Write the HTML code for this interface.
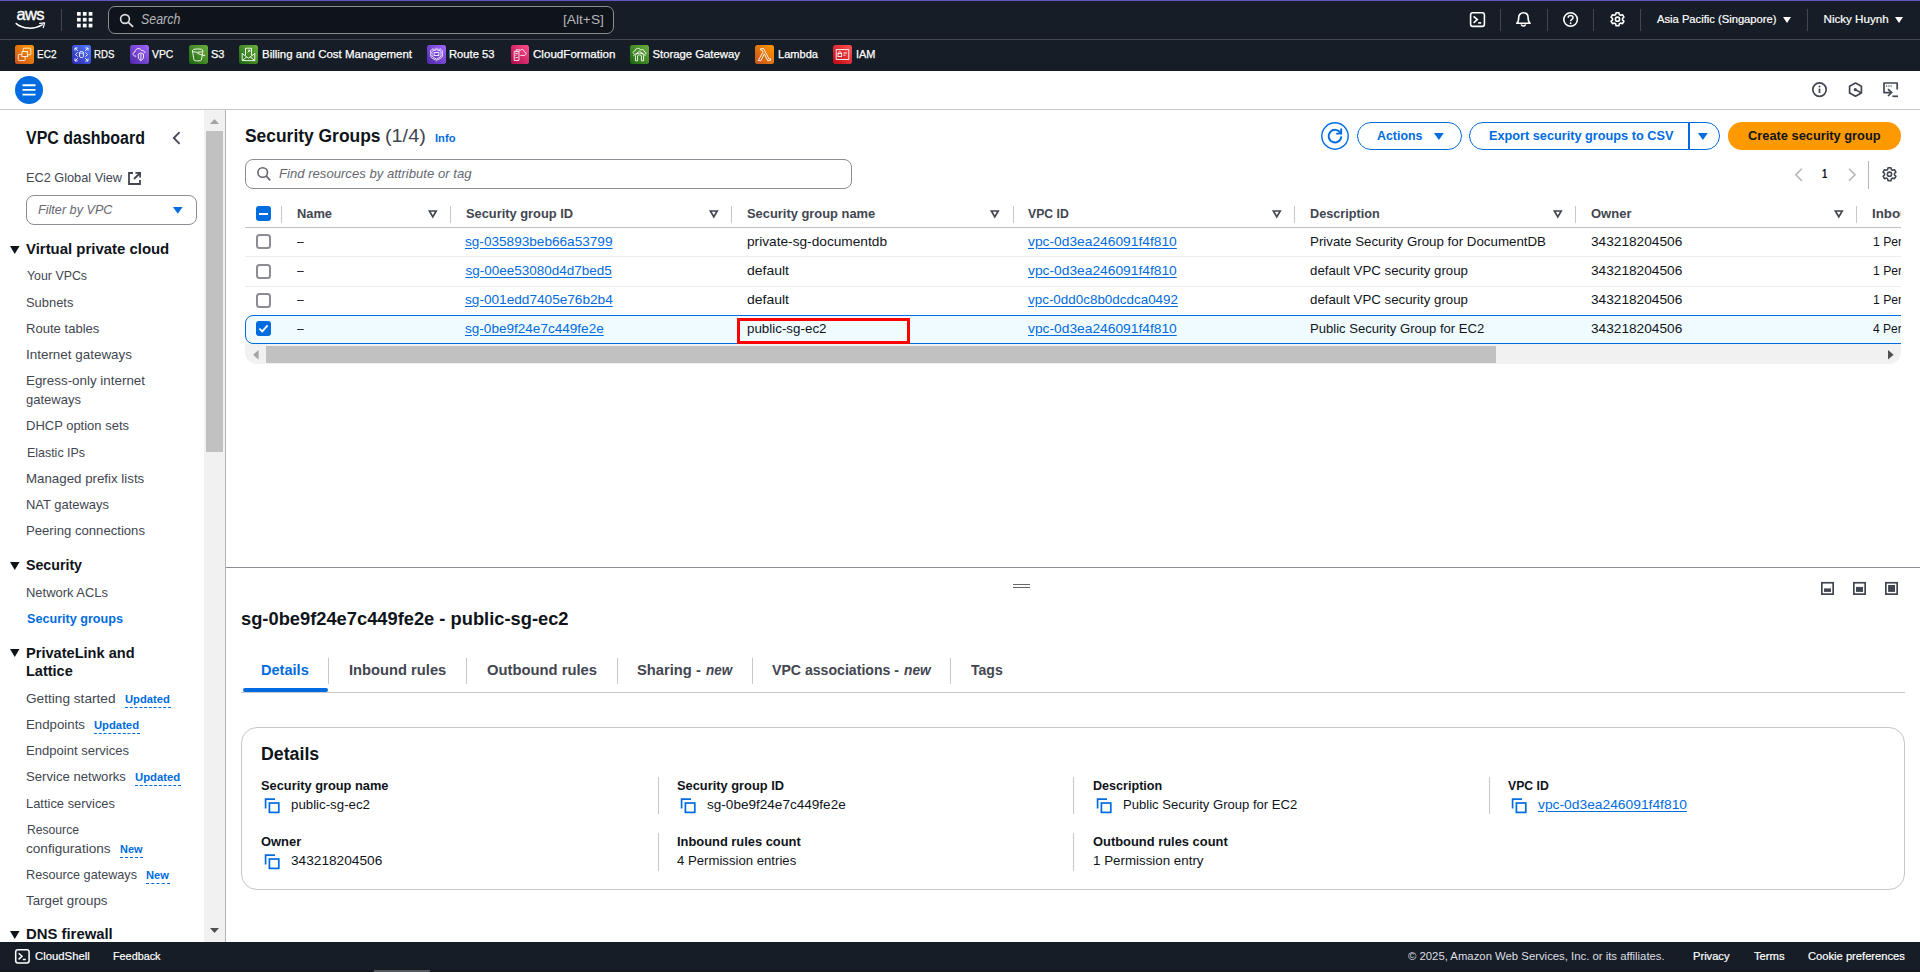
<!DOCTYPE html>
<html><head><meta charset="utf-8">
<style>
*{box-sizing:border-box;margin:0;padding:0}
html,body{width:1920px;height:972px;overflow:hidden;background:#fff;font-family:"Liberation Sans",sans-serif;color:#0f141a;font-size:14px}
div{position:absolute}
.t{position:absolute;white-space:nowrap}
svg{position:absolute;overflow:visible}
.vsep{top:9px;width:1px;height:22px;background:#424650}
.fav{top:45px;width:19px;height:19px;border-radius:2px;overflow:hidden}

.dash{height:0;border-top:1px dashed #006ce0}
.hsep{top:206px;width:1px;height:17px;background:#c6c6cd}
.cb{left:256px;width:15px;height:15px;border:2px solid #8c8c94;border-radius:3.5px;background:#fff}
.cbon{left:256px;width:15px;height:15px;border-radius:3px;background:#006ce0}
.tsep{top:658px;width:1px;height:26px;background:#c6c6cd}
.dsep{width:1px;background:#c6c6cd}
.btn{top:122px;height:28px;border:1.5px solid #006ce0;border-radius:14px;background:#fff}
</style></head><body>
<!-- top navigation -->
<div style="left:0;top:0;width:1920px;height:71px;background:#161d26"></div>
<div style="left:0;top:0;width:1920px;height:1px;background:#6355c4"></div>
<div style="left:0;top:39px;width:1920px;height:1px;background:#424650"></div>
<div style="left:108px;top:6px;width:506px;height:28px;border:1px solid #8c8c94;border-radius:7px;background:#0f141a"></div>
<div class="vsep" style="left:61px"></div>
<div class="vsep" style="left:1500px"></div>
<div class="vsep" style="left:1547px"></div>
<div class="vsep" style="left:1593px"></div>
<div class="vsep" style="left:1640px"></div>
<div class="vsep" style="left:1807px"></div>
<!-- toolbar -->
<div style="left:0;top:109px;width:1920px;height:1px;background:#c6c6cd"></div>
<!-- sidebar -->
<div style="left:204px;top:110px;width:21px;height:832px;background:#f1f1f1"></div>
<div style="left:206px;top:131px;width:17px;height:321px;background:#c1c1c1"></div>
<div style="left:225px;top:110px;width:1px;height:832px;background:#b4b4bb"></div>
<div style="left:26px;top:195px;width:171px;height:30px;border:1px solid #8c8c94;border-radius:8px;background:#fff"></div>
<!-- main: table -->
<div style="left:245px;top:159px;width:607px;height:30px;border:1px solid #8c8c94;border-radius:8px;background:#fff"></div>
<div style="left:245px;top:227px;width:1656px;height:1px;background:#c0c0c7"></div>
<div style="left:245px;top:256px;width:1656px;height:1px;background:#ebebf0"></div>
<div style="left:245px;top:286px;width:1656px;height:1px;background:#ebebf0"></div>
<div style="left:245px;top:314.8px;width:1666px;height:29.2px;border:1.3px solid #006ce0;border-radius:8px;background:#f0fbff;clip-path:inset(0 10px 0 0)"></div>
<div style="left:737px;top:318px;width:172.5px;height:26px;border:3px solid #ff0000"></div>
<!-- h-scrollbar -->
<div style="left:245px;top:344px;width:1656px;height:20px;background:#f1f1f1;border-radius:0 0 12px 12px"></div>
<div style="left:266px;top:346px;width:1230px;height:17px;background:#c1c1c1"></div>
<!-- split line -->
<div style="left:226px;top:567px;width:1694px;height:1px;background:#8c8c94"></div>
<div style="left:1013px;top:583.5px;width:16.5px;height:1px;background:#656871"></div>
<div style="left:1013px;top:587.2px;width:16.5px;height:1px;background:#656871"></div>
<!-- tabs -->
<div style="left:241px;top:692px;width:1664px;height:1px;background:#c6c6cd"></div>
<div style="left:243px;top:688px;width:85px;height:4px;background:#006ce0;border-radius:2px"></div>
<div class="tsep" style="left:328px"></div>
<div class="tsep" style="left:466px"></div>
<div class="tsep" style="left:617px"></div>
<div class="tsep" style="left:752px"></div>
<div class="tsep" style="left:950px"></div>
<!-- card -->
<div style="left:241px;top:727px;width:1664px;height:163px;border:1px solid #c6c6cd;border-radius:16px;background:#fff"></div>
<div class="dsep" style="left:658px;top:777px;height:37px"></div>
<div class="dsep" style="left:658px;top:833px;height:38px"></div>
<div class="dsep" style="left:1073px;top:777px;height:37px"></div>
<div class="dsep" style="left:1073px;top:833px;height:38px"></div>
<div class="dsep" style="left:1489px;top:777px;height:37px"></div>
<!-- footer -->
<div style="left:0;top:942px;width:1920px;height:30px;background:#161d26"></div>
<div style="left:0;top:970px;width:1920px;height:2px;background:#16181b"></div>
<div style="left:374px;top:970px;width:56px;height:2px;background:#55585c"></div>
<!-- ============ NAV1 icons ============ -->
<span class="t" style="left:16.4px;top:6px;font-size:16.5px;line-height:16.5px;color:#fff;letter-spacing:-0.6px;-webkit-text-stroke:0.35px #fff">aws</span>
<svg style="left:15px;top:22.2px" width="32" height="9" viewBox="0 0 32 9"><path d="M1.2 1.6 C8 7.2 19 7.6 27.2 2.9" fill="none" stroke="#fff" stroke-width="1.5" stroke-linecap="round"/><path d="M24.6 1.3 L29.6 0.9 L28.3 5.6" fill="none" stroke="#fff" stroke-width="1.2" stroke-linejoin="round" stroke-linecap="round"/></svg>
<svg style="left:77px;top:12px" width="15.4" height="15.4" viewBox="0 0 15.4 15.4" fill="#fff"><rect x="0" y="0" width="3.7" height="3.7"/><rect x="5.85" y="0" width="3.7" height="3.7"/><rect x="11.7" y="0" width="3.7" height="3.7"/><rect x="0" y="5.85" width="3.7" height="3.7"/><rect x="5.85" y="5.85" width="3.7" height="3.7"/><rect x="11.7" y="5.85" width="3.7" height="3.7"/><rect x="0" y="11.7" width="3.7" height="3.7"/><rect x="5.85" y="11.7" width="3.7" height="3.7"/><rect x="11.7" y="11.7" width="3.7" height="3.7"/></svg>
<svg style="left:119px;top:13px" width="16" height="16" viewBox="0 0 16 16"><circle cx="6" cy="6" r="4.4" fill="none" stroke="#dedee3" stroke-width="1.6"/><path d="M9.3 9.3 L13.6 13.4" stroke="#dedee3" stroke-width="1.7" stroke-linecap="round"/></svg>
<!-- cloudshell -->
<svg style="left:1469px;top:11px" width="17" height="17" viewBox="0 0 17 17"><rect x="1.6" y="1.8" width="13.8" height="13.6" rx="2.2" fill="none" stroke="#fff" stroke-width="1.6"/><path d="M4.6 5.4 L8.3 8.6 L4.6 11.8" fill="none" stroke="#fff" stroke-width="1.6" stroke-linejoin="miter"/><path d="M9.2 11.9 H12.2" stroke="#fff" stroke-width="1.6"/></svg>
<!-- bell -->
<svg style="left:1515px;top:11px" width="17" height="17" viewBox="0 0 17 17"><path d="M1.7 12.3 C3.6 10.8 3.7 8.8 3.7 6.6 C3.7 3.6 5.7 1.8 8.4 1.8 C11.100000000000001 1.8 13.100000000000001 3.6 13.100000000000001 6.6 C13.100000000000001 8.8 13.2 10.8 15.1 12.3 Z" fill="none" stroke="#fff" stroke-width="1.6" stroke-linejoin="round"/><path d="M6.3 13.4 C6.6 15.6 10.2 15.6 10.5 13.4" fill="none" stroke="#fff" stroke-width="1.6"/></svg>
<!-- help -->
<svg style="left:1562px;top:11px" width="17" height="17" viewBox="0 0 17 17"><circle cx="8.6" cy="8.5" r="6.8" fill="none" stroke="#fff" stroke-width="1.6"/><path d="M6.2 6.7 C6.2 3.9 11 3.9 11 6.7 C11 8.4 8.6 8.4 8.6 10.2" fill="none" stroke="#fff" stroke-width="1.5"/><circle cx="8.6" cy="12.3" r="0.95" fill="#fff"/></svg>
<!-- gear -->
<svg style="left:1609px;top:11px" width="17" height="17" viewBox="0 0 17 17"><g id="gearshape"><path d="M7.1 1.7 H9.9 L10.4 3.6 L11.6 4.3 L13.5 3.7 L14.9 6.1 L13.5 7.5 V8.9 L14.9 10.3 L13.5 12.7 L11.6 12.1 L10.4 12.8 L9.9 14.7 H7.1 L6.6 12.8 L5.4 12.1 L3.5 12.7 L2.1 10.3 L3.5 8.9 V7.5 L2.1 6.1 L3.5 3.7 L5.4 4.3 L6.6 3.6 Z" fill="none" stroke="#fff" stroke-width="1.6" stroke-linejoin="round"/><circle cx="8.5" cy="8.2" r="2.1" fill="none" stroke="#fff" stroke-width="1.6"/></g></svg>
<svg style="left:1782.5px;top:16.5px" width="8" height="6" viewBox="0 0 8 6"><path d="M0 0 H8 L4 6 Z" fill="#fff"/></svg>
<svg style="left:1895px;top:16.5px" width="8" height="6" viewBox="0 0 8 6"><path d="M0 0 H8 L4 6 Z" fill="#fff"/></svg>

<!-- ============ favourites icons ============ -->
<svg class="fav" style="left:15px" viewBox="0 0 19 19"><defs><linearGradient id="gO" x1="0" y1="1" x2="1" y2="0"><stop offset="0" stop-color="#c8511b"/><stop offset="1" stop-color="#ff9900"/></linearGradient><linearGradient id="gB" x1="0" y1="1" x2="1" y2="0"><stop offset="0" stop-color="#2e27ad"/><stop offset="1" stop-color="#527fff"/></linearGradient><linearGradient id="gP" x1="0" y1="1" x2="1" y2="0"><stop offset="0" stop-color="#4d27a8"/><stop offset="1" stop-color="#a166ff"/></linearGradient><linearGradient id="gG" x1="0" y1="1" x2="1" y2="0"><stop offset="0" stop-color="#1b660f"/><stop offset="1" stop-color="#6cae3e"/></linearGradient><linearGradient id="gK" x1="0" y1="1" x2="1" y2="0"><stop offset="0" stop-color="#b0084d"/><stop offset="1" stop-color="#ff4f8b"/></linearGradient><linearGradient id="gR" x1="0" y1="1" x2="1" y2="0"><stop offset="0" stop-color="#bd0816"/><stop offset="1" stop-color="#ff5252"/></linearGradient></defs>
<rect width="19" height="19" rx="1.5" fill="url(#gO)"/><g fill="none" stroke="#fff" stroke-width="0.85"><rect x="8.2" y="3.2" width="7.6" height="6.6" rx="0.8"/><rect x="3.3" y="9.4" width="6.8" height="6.2" rx="0.8"/><rect x="7" y="6.6" width="5.6" height="5" fill="url(#gO)"/></g></svg>
<svg class="fav" style="left:72px" viewBox="0 0 19 19"><rect width="19" height="19" rx="1.5" fill="url(#gB)"/><g fill="none" stroke="#fff" stroke-width="0.9"><path d="M3 5.6 V3 H5.6 M3 3 L5.8 5.8 M13.4 3 H16 V5.6 M16 3 L13.2 5.8 M3 13.4 V16 H5.6 M3 16 L5.8 13.2 M16 13.4 V16 H13.4 M16 16 L13.2 13.2"/><path d="M5.6 7.4 L3.4 9.5 L5.6 11.6 M13.4 7.4 L15.6 9.5 L13.4 11.6"/><path d="M7.6 7.3 C7.6 6.2 11.4 6.2 11.4 7.3 V11.7 C11.4 12.8 7.6 12.8 7.6 11.7 Z M7.6 7.5 C7.6 8.5 11.4 8.5 11.4 7.5"/></g></svg>
<svg class="fav" style="left:130px" viewBox="0 0 19 19"><rect width="19" height="19" rx="1.5" fill="url(#gP)"/><g fill="none" stroke="#fff" stroke-width="0.9"><path d="M6.2 11.2 C2.2 11.4 2.2 7.2 5 6.9 C5 3.2 10.6 2.4 11.6 5.6 C13.4 5.2 14.8 6.4 14.9 8"/><path d="M8.3 9 C9.6 8.8 10.3 8.3 10.9 7.7 C11.5 8.3 12.2 8.8 13.5 9 V12 C13.5 13.8 12 15.1 10.9 15.7 C9.8 15.1 8.3 13.8 8.3 12 Z M10.9 8.6 V15"/></g></svg>
<svg class="fav" style="left:189px" viewBox="0 0 19 19"><rect width="19" height="19" rx="1.5" fill="url(#gG)"/><g fill="none" stroke="#fff" stroke-width="0.9"><path d="M3.4 5.6 L5 15 C5 16.2 12.4 16.2 12.4 15 L14 5.6"/><ellipse cx="8.7" cy="5.6" rx="5.3" ry="1.7"/><path d="M8.3 8.4 L15.2 10.6 C16.2 10.9 16 9.8 15 9.6"/></g></svg>
<svg class="fav" style="left:239px" viewBox="0 0 19 19"><rect width="19" height="19" rx="1.5" fill="url(#gG)"/><g fill="none" stroke="#fff" stroke-width="0.9"><path d="M3.2 8.2 V15.6 H15.8 V8.2 M3.2 15.6 L7.6 12 M15.8 15.6 L11.4 12 M3.2 8.6 L9.5 13.2 L15.8 8.6"/><path d="M6.5 10.4 V3.2 H12.5 V10.4"/><path d="M8.6 7.4 L10.6 5.4 M9.2 5.2 H10.8 V6.8"/></g></svg>
<svg class="fav" style="left:427px" viewBox="0 0 19 19"><rect width="19" height="19" rx="1.5" fill="url(#gP)"/><g fill="none" stroke="#fff" stroke-width="0.85"><path d="M9.5 3.2 C8.3 4.6 6.4 4.6 5.4 3.8 C5 5 4.2 5.6 3.4 5.8 C4.4 8.6 2.6 10.4 4.4 12.6 C5.6 14 8.4 14.2 9.5 15.8 C10.6 14.2 13.4 14 14.6 12.6 C16.4 10.4 14.6 8.6 15.6 5.8 C14.8 5.6 14 5 13.6 3.8 C12.6 4.6 10.7 4.6 9.5 3.2 Z"/><path d="M9.5 4.6 C8.4 5.6 7 5.8 6 5.4 C5.8 6.2 5.4 6.6 4.8 6.9 C5.4 9 4.4 10.4 5.6 11.8 C6.6 12.9 8.6 13.2 9.5 14.2 C10.4 13.2 12.4 12.9 13.4 11.8 C14.6 10.4 13.6 9 14.2 6.9 C13.6 6.6 13.2 6.2 13 5.4 C12 5.8 10.6 5.6 9.5 4.6 Z"/><rect x="7.1" y="7.6" width="4.8" height="3" /></g></svg>
<svg class="fav" style="left:511px;width:18px" viewBox="0 0 19 19" preserveAspectRatio="none"><rect width="19" height="19" rx="1.5" fill="url(#gK)"/><g fill="none" stroke="#fff" stroke-width="0.9"><path d="M3.4 6.4 H8.4 V15.4 H3.4 Z M4.6 8.4 H7.2 M4.6 10.2 H6 M4.6 12.6 H7.2"/><path d="M5.4 6.2 V4.8 H9.4 M9.8 10.4 H14 C16.6 10.2 16.4 6.8 14 6.8 C13.6 4 9.8 3.8 9.2 6.4"/></g></svg>
<svg class="fav" style="left:630px" viewBox="0 0 19 19"><rect width="19" height="19" rx="1.5" fill="url(#gG)"/><g fill="none" stroke="#fff" stroke-width="0.9"><path d="M4.4 9 C2.4 8.6 2.8 5.8 5 6 C5.2 3 9.6 2.4 10.6 5 C12.2 3.8 14.4 5 14 6.6 C16.4 6.6 16.6 9 14.8 9.2"/><path d="M3.4 10.6 L9.5 6.2 L15.6 10.6"/><path d="M5.4 15.8 V10.6 C5.4 7.4 13.6 7.4 13.6 10.6 V15.8 H11.4 V11 C11.4 9.4 7.6 9.4 7.6 11 V15.8 Z"/></g></svg>
<svg class="fav" style="left:755px" viewBox="0 0 19 19"><rect width="19" height="19" rx="1.5" fill="url(#gO)"/><path d="M5.6 3.6 H8.6 L14 14 L15.4 13.6 L15.8 15.2 L12.8 15.8 L9.2 8.8 L6 15.6 H3.2 L8 7 L7.2 5.2 H5.6 Z" fill="none" stroke="#fff" stroke-width="0.9" stroke-linejoin="round"/></svg>
<svg class="fav" style="left:833px" viewBox="0 0 19 19"><rect width="19" height="19" rx="1.5" fill="url(#gR)"/><g fill="none" stroke="#fff" stroke-width="0.9"><rect x="3.2" y="4.6" width="12.6" height="9.8"/><rect x="5" y="8.4" width="3.6" height="3.2"/><path d="M5.8 8.4 V7.4 C5.8 6.2 7.8 6.2 7.8 7.4 V8.4 M10.4 8 H14 M10.4 10.2 H12.6"/></g></svg>

<!-- ============ toolbar ============ -->
<svg style="left:15px;top:76px" width="28" height="28" viewBox="0 0 28 28"><circle cx="14" cy="14" r="14" fill="#006ce0"/><path d="M7.5 9.2 H20.5 M7.5 13.9 H20.5 M7.5 18.6 H20.5" stroke="#fff" stroke-width="1.9"/></svg>
<svg style="left:1811px;top:81px" width="17" height="17" viewBox="0 0 17 17"><circle cx="8.5" cy="8.6" r="6.7" fill="none" stroke="#424650" stroke-width="1.7"/><path d="M8.5 7.6 V12" stroke="#424650" stroke-width="1.7"/><circle cx="8.5" cy="5.4" r="1" fill="#424650"/></svg>
<svg style="left:1847px;top:81px" width="17" height="17" viewBox="0 0 17 17"><path d="M8.5 2 L14.4 5.3 V11.9 L8.5 15.2 L2.6 11.9 V5.3 Z" fill="none" stroke="#424650" stroke-width="1.7" stroke-linejoin="round"/><circle cx="8.3" cy="8.6" r="1.6" fill="#424650"/><path d="M8.3 8.6 L14.2 11.8" stroke="#424650" stroke-width="1.6"/></svg>
<svg style="left:1882px;top:81px" width="17" height="17" viewBox="0 0 17 17"><path d="M15.2 8.6 V2 H2 V11.6 H8.6" fill="none" stroke="#424650" stroke-width="1.7" stroke-linejoin="round"/><path d="M4.2 5 H5.2 M6.4 5 H7.4 M8.6 5 H9.6" stroke="#424650" stroke-width="1.3"/><path d="M6 8.2 L9.6 11.6 L6 15" fill="none" stroke="#424650" stroke-width="1.7"/><path d="M10.4 15.3 H16" stroke="#424650" stroke-width="1.7"/></svg>

<!-- ============ sidebar ============ -->
<svg style="left:172px;top:131px" width="9" height="14" viewBox="0 0 9 14"><path d="M7.6 1.2 L1.8 7 L7.6 12.8" fill="none" stroke="#424650" stroke-width="1.8"/></svg>
<svg style="left:127px;top:171px" width="15" height="15" viewBox="0 0 15 15"><path d="M6 2 H2 V13 H13 V9" fill="none" stroke="#424650" stroke-width="1.8"/><path d="M8.4 1.9 H13.1 V6.6 M13 2 L7 8" fill="none" stroke="#424650" stroke-width="1.8"/></svg>
<svg style="left:173px;top:207px" width="10" height="7" viewBox="0 0 10 7"><path d="M0 0 H9.6 L4.8 6.8 Z" fill="#006ce0"/></svg>
<svg style="left:10px;top:245.5px" width="10" height="8" viewBox="0 0 10 8"><path d="M0 0 H9.5 L4.75 8 Z" fill="#0f141a"/></svg>
<svg style="left:10px;top:562px" width="10" height="8" viewBox="0 0 10 8"><path d="M0 0 H9.5 L4.75 8 Z" fill="#0f141a"/></svg>
<svg style="left:10px;top:648.8px" width="10" height="8" viewBox="0 0 10 8"><path d="M0 0 H9.5 L4.75 8 Z" fill="#0f141a"/></svg>
<svg style="left:10px;top:931.2px" width="10" height="8" viewBox="0 0 10 8"><path d="M0 0 H9.5 L4.75 8 Z" fill="#0f141a"/></svg>
<div class="dash" style="left:125px;top:707px;width:46px"></div>
<div class="dash" style="left:94px;top:733px;width:46px"></div>
<div class="dash" style="left:135px;top:785px;width:46px"></div>
<div class="dash" style="left:119.5px;top:857px;width:23.5px"></div>
<div class="dash" style="left:146px;top:883px;width:24px"></div>
<svg style="left:210px;top:119px" width="9" height="5" viewBox="0 0 9 5"><path d="M0 5 H9 L4.5 0 Z" fill="#a3a3a3"/></svg>
<svg style="left:210px;top:928px" width="9" height="5" viewBox="0 0 9 5"><path d="M0 0 H9 L4.5 5 Z" fill="#505050"/></svg>

<!-- ============ footer ============ -->
<svg style="left:14px;top:948px" width="17" height="17" viewBox="0 0 17 17"><rect x="1.7" y="1.7" width="13.4" height="13.2" rx="2.2" fill="none" stroke="#fff" stroke-width="1.5"/><path d="M4.6 5.2 L8 8.3 L4.6 11.4" fill="none" stroke="#fff" stroke-width="1.5"/><path d="M8.8 11.5 H11.8" stroke="#fff" stroke-width="1.5"/></svg>

<!-- ============ main header buttons ============ -->
<svg style="left:1320px;top:121px" width="30" height="30" viewBox="0 0 30 30"><circle cx="15" cy="15" r="13.2" fill="#fff" stroke="#006ce0" stroke-width="1.4"/><path d="M20.6 12.2 A6.3 6.3 0 1 0 21.3 15.4" fill="none" stroke="#006ce0" stroke-width="1.9"/><path d="M21.2 7.6 V12.6 H16.2" fill="none" stroke="#006ce0" stroke-width="1.9" stroke-linejoin="miter"/></svg>
<div class="btn" style="left:1357px;width:105px"></div>
<svg style="left:1433.5px;top:133px" width="10" height="7" viewBox="0 0 10 7"><path d="M0 0 H9.8 L4.9 7 Z" fill="#006ce0"/></svg>
<div class="btn" style="left:1468.5px;width:251.5px"></div>
<div style="left:1688px;top:122px;width:1.5px;height:28px;background:#006ce0"></div>
<svg style="left:1697.8px;top:133px" width="10" height="7" viewBox="0 0 10 7"><path d="M0 0 H9.8 L4.9 7 Z" fill="#006ce0"/></svg>
<div style="left:1728px;top:122px;width:173px;height:28px;border-radius:14px;background:#ff9900"></div>
<svg style="left:249px;top:166px" width="30" height="16" viewBox="0 0 30 16"><circle cx="13.7" cy="6.5" r="4.8" fill="none" stroke="#656871" stroke-width="1.6"/><path d="M17.1 9.9 L21.3 14.3" stroke="#656871" stroke-width="1.7"/></svg>
<!-- pagination -->
<svg style="left:1794px;top:168px" width="10" height="14" viewBox="0 0 10 14"><path d="M7.8 0.8 L1.8 6.8 L7.8 12.8" fill="none" stroke="#b4b4bb" stroke-width="1.6"/></svg>
<svg style="left:1847px;top:168px" width="10" height="14" viewBox="0 0 10 14"><path d="M2 0.8 L8 6.8 L2 12.8" fill="none" stroke="#b4b4bb" stroke-width="1.6"/></svg>
<div style="left:1868px;top:161px;width:1px;height:28px;background:#b4b4bb"></div>
<svg style="left:1881px;top:166px" width="17" height="17" viewBox="0 0 17 17"><path d="M7.1 1.7 H9.9 L10.4 3.6 L11.6 4.3 L13.5 3.7 L14.9 6.1 L13.5 7.5 V8.9 L14.9 10.3 L13.5 12.7 L11.6 12.1 L10.4 12.8 L9.9 14.7 H7.1 L6.6 12.8 L5.4 12.1 L3.5 12.7 L2.1 10.3 L3.5 8.9 V7.5 L2.1 6.1 L3.5 3.7 L5.4 4.3 L6.6 3.6 Z" fill="none" stroke="#424650" stroke-width="1.6" stroke-linejoin="round"/><circle cx="8.5" cy="8.2" r="2.1" fill="none" stroke="#424650" stroke-width="1.6"/></svg>

<!-- ============ table ============ -->
<div class="cbon" style="top:206px"></div>
<div style="left:259px;top:212.6px;width:9px;height:2px;background:#fff"></div>
<div class="hsep" style="left:281px"></div>
<div class="hsep" style="left:450px"></div>
<div class="hsep" style="left:731px"></div>
<div class="hsep" style="left:1013px"></div>
<div class="hsep" style="left:1294px"></div>
<div class="hsep" style="left:1575px"></div>
<div class="hsep" style="left:1856px"></div>
<svg style="left:428px;top:210px" width="10" height="9" viewBox="0 0 10 9"><path id="sortp" d="M1.4 1 H8.2 L4.8 6.9 Z" fill="none" stroke="#424650" stroke-width="1.7" stroke-linejoin="miter"/></svg>
<svg style="left:709px;top:210px" width="10" height="9" viewBox="0 0 10 9"><path d="M1.4 1 H8.2 L4.8 6.9 Z" fill="none" stroke="#424650" stroke-width="1.7"/></svg>
<svg style="left:990px;top:210px" width="10" height="9" viewBox="0 0 10 9"><path d="M1.4 1 H8.2 L4.8 6.9 Z" fill="none" stroke="#424650" stroke-width="1.7"/></svg>
<svg style="left:1272px;top:210px" width="10" height="9" viewBox="0 0 10 9"><path d="M1.4 1 H8.2 L4.8 6.9 Z" fill="none" stroke="#424650" stroke-width="1.7"/></svg>
<svg style="left:1553px;top:210px" width="10" height="9" viewBox="0 0 10 9"><path d="M1.4 1 H8.2 L4.8 6.9 Z" fill="none" stroke="#424650" stroke-width="1.7"/></svg>
<svg style="left:1834px;top:210px" width="10" height="9" viewBox="0 0 10 9"><path d="M1.4 1 H8.2 L4.8 6.9 Z" fill="none" stroke="#424650" stroke-width="1.7"/></svg>
<div class="cb" style="top:234px"></div>
<div class="cb" style="top:264px"></div>
<div class="cb" style="top:293px"></div>
<div class="cbon" style="top:321px"></div>
<svg style="left:256px;top:321px" width="15" height="15" viewBox="0 0 15 15"><path d="M3.4 7.6 L6.3 10.4 L11.6 4.4" fill="none" stroke="#fff" stroke-width="1.9"/></svg>
<svg style="left:253px;top:350px" width="6" height="10" viewBox="0 0 6 10"><path d="M5.6 0 V9.6 L0 4.8 Z" fill="#a3a3a3"/></svg>
<svg style="left:1888px;top:350px" width="6" height="10" viewBox="0 0 6 10"><path d="M0 0 V9.6 L5.6 4.8 Z" fill="#505050"/></svg>

<!-- ============ split panel ============ -->
<svg style="left:1820px;top:581px" width="15" height="15" viewBox="0 0 15 15"><rect x="1.85" y="1.75" width="11.3" height="11.4" fill="none" stroke="#424650" stroke-width="1.7"/><rect x="4" y="7.4" width="7" height="3.5" fill="#424650"/></svg>
<svg style="left:1852px;top:581px" width="15" height="15" viewBox="0 0 15 15"><rect x="1.85" y="1.75" width="11.3" height="11.4" fill="none" stroke="#424650" stroke-width="1.7"/><rect x="4" y="5.9" width="7" height="5" fill="#424650"/></svg>
<svg style="left:1884px;top:581px" width="15" height="15" viewBox="0 0 15 15"><rect x="1.85" y="1.75" width="11.3" height="11.4" fill="none" stroke="#424650" stroke-width="1.7"/><rect x="4.1" y="4" width="6.9" height="6.9" fill="#424650"/></svg>
<!-- copy icons -->
<svg class="cp" style="left:264px;top:798px" width="16" height="16" viewBox="0 0 16 16"><path d="M1.6 10.6 V1.2 H11" fill="none" stroke="#006ce0" stroke-width="1.7"/><rect x="5.4" y="5" width="9.4" height="9.4" fill="none" stroke="#006ce0" stroke-width="1.7"/></svg>
<svg class="cp" style="left:264px;top:854px" width="16" height="16" viewBox="0 0 16 16"><path d="M1.6 10.6 V1.2 H11" fill="none" stroke="#006ce0" stroke-width="1.7"/><rect x="5.4" y="5" width="9.4" height="9.4" fill="none" stroke="#006ce0" stroke-width="1.7"/></svg>
<svg class="cp" style="left:680px;top:798px" width="16" height="16" viewBox="0 0 16 16"><path d="M1.6 10.6 V1.2 H11" fill="none" stroke="#006ce0" stroke-width="1.7"/><rect x="5.4" y="5" width="9.4" height="9.4" fill="none" stroke="#006ce0" stroke-width="1.7"/></svg>
<svg class="cp" style="left:1096px;top:798px" width="16" height="16" viewBox="0 0 16 16"><path d="M1.6 10.6 V1.2 H11" fill="none" stroke="#006ce0" stroke-width="1.7"/><rect x="5.4" y="5" width="9.4" height="9.4" fill="none" stroke="#006ce0" stroke-width="1.7"/></svg>
<svg class="cp" style="left:1511px;top:798px" width="16" height="16" viewBox="0 0 16 16"><path d="M1.6 10.6 V1.2 H11" fill="none" stroke="#006ce0" stroke-width="1.7"/><rect x="5.4" y="5" width="9.4" height="9.4" fill="none" stroke="#006ce0" stroke-width="1.7"/></svg>

<span class="t" style="left:141.00px;top:12.00px;font-size:14px;line-height:14px;color:#b4b4bb;font-style:italic;transform:scaleX(0.8859);transform-origin:0 0;">Search</span>
<span class="t" style="left:562.95px;top:13.00px;font-size:13.5px;line-height:13.5px;color:#b4b4bb;transform:scaleX(1.0185);transform-origin:0 0;">[Alt+S]</span>
<span class="t" style="left:1657.05px;top:13.00px;font-size:11.6px;line-height:11.6px;color:#ffffff;-webkit-text-stroke:0.2px #fff;transform:scaleX(0.9658);transform-origin:0 0;">Asia Pacific (Singapore)</span>
<span class="t" style="left:1823.54px;top:13.00px;font-size:11.6px;line-height:11.6px;color:#ffffff;-webkit-text-stroke:0.2px #fff;">Nicky Huynh</span>
<span class="t" style="left:37.10px;top:49.00px;font-size:11.3px;line-height:11.3px;color:#ffffff;-webkit-text-stroke:0.25px #fff;transform:scaleX(0.8870);transform-origin:0 0;">EC2</span>
<span class="t" style="left:94.21px;top:49.00px;font-size:11.3px;line-height:11.3px;color:#ffffff;-webkit-text-stroke:0.25px #fff;transform:scaleX(0.8550);transform-origin:0 0;">RDS</span>
<span class="t" style="left:152.34px;top:49.00px;font-size:11.3px;line-height:11.3px;color:#ffffff;-webkit-text-stroke:0.25px #fff;transform:scaleX(0.9146);transform-origin:0 0;">VPC</span>
<span class="t" style="left:210.56px;top:49.00px;font-size:11.3px;line-height:11.3px;color:#ffffff;-webkit-text-stroke:0.25px #fff;transform:scaleX(0.9763);transform-origin:0 0;">S3</span>
<span class="t" style="left:261.54px;top:49.00px;font-size:11.3px;line-height:11.3px;color:#ffffff;-webkit-text-stroke:0.25px #fff;transform:scaleX(1.0164);transform-origin:0 0;">Billing and Cost Management</span>
<span class="t" style="left:449.05px;top:49.00px;font-size:11.3px;line-height:11.3px;color:#ffffff;-webkit-text-stroke:0.25px #fff;transform:scaleX(0.9922);transform-origin:0 0;">Route 53</span>
<span class="t" style="left:532.54px;top:49.00px;font-size:11.3px;line-height:11.3px;color:#ffffff;-webkit-text-stroke:0.25px #fff;transform:scaleX(1.0264);transform-origin:0 0;">CloudFormation</span>
<span class="t" style="left:652.55px;top:49.00px;font-size:11.3px;line-height:11.3px;color:#ffffff;-webkit-text-stroke:0.25px #fff;">Storage Gateway</span>
<span class="t" style="left:777.56px;top:49.00px;font-size:11.3px;line-height:11.3px;color:#ffffff;-webkit-text-stroke:0.25px #fff;transform:scaleX(0.9797);transform-origin:0 0;">Lambda</span>
<span class="t" style="left:855.56px;top:49.00px;font-size:11.3px;line-height:11.3px;color:#ffffff;-webkit-text-stroke:0.25px #fff;transform:scaleX(0.9705);transform-origin:0 0;">IAM</span>
<span class="t" style="left:26.36px;top:130.00px;font-size:17.5px;line-height:17.5px;color:#0f141a;font-weight:bold;transform:scaleX(0.9132);transform-origin:0 0;">VPC dashboard</span>
<span class="t" style="left:26.49px;top:171.00px;font-size:13.5px;line-height:13.5px;color:#424650;transform:scaleX(0.9429);transform-origin:0 0;">EC2 Global View</span>
<span class="t" style="left:37.99px;top:203.00px;font-size:13.5px;line-height:13.5px;color:#656871;font-style:italic;transform:scaleX(0.9367);transform-origin:0 0;">Filter by VPC</span>
<span class="t" style="left:26.51px;top:269.00px;font-size:13.5px;line-height:13.5px;color:#424650;transform:scaleX(0.9154);transform-origin:0 0;">Your VPCs</span>
<span class="t" style="left:26.48px;top:296.00px;font-size:13.5px;line-height:13.5px;color:#424650;transform:scaleX(0.9567);transform-origin:0 0;">Subnets</span>
<span class="t" style="left:26.48px;top:322.00px;font-size:13.5px;line-height:13.5px;color:#424650;transform:scaleX(0.9682);transform-origin:0 0;">Route tables</span>
<span class="t" style="left:26.46px;top:348.00px;font-size:13.5px;line-height:13.5px;color:#424650;transform:scaleX(0.9946);transform-origin:0 0;">Internet gateways</span>
<span class="t" style="left:26.46px;top:374.00px;font-size:13.5px;line-height:13.5px;color:#424650;transform:scaleX(0.9912);transform-origin:0 0;">Egress-only internet</span>
<span class="t" style="left:26.48px;top:393.00px;font-size:13.5px;line-height:13.5px;color:#424650;transform:scaleX(0.9641);transform-origin:0 0;">gateways</span>
<span class="t" style="left:26.48px;top:419.00px;font-size:13.5px;line-height:13.5px;color:#424650;transform:scaleX(0.9621);transform-origin:0 0;">DHCP option sets</span>
<span class="t" style="left:26.50px;top:446.00px;font-size:13.5px;line-height:13.5px;color:#424650;transform:scaleX(0.9202);transform-origin:0 0;">Elastic IPs</span>
<span class="t" style="left:26.47px;top:472.00px;font-size:13.5px;line-height:13.5px;color:#424650;transform:scaleX(0.9849);transform-origin:0 0;">Managed prefix lists</span>
<span class="t" style="left:26.48px;top:498.00px;font-size:13.5px;line-height:13.5px;color:#424650;transform:scaleX(0.9590);transform-origin:0 0;">NAT gateways</span>
<span class="t" style="left:26.47px;top:524.00px;font-size:13.5px;line-height:13.5px;color:#424650;transform:scaleX(0.9727);transform-origin:0 0;">Peering connections</span>
<span class="t" style="left:26.48px;top:586.00px;font-size:13.5px;line-height:13.5px;color:#424650;transform:scaleX(0.9587);transform-origin:0 0;">Network ACLs</span>
<span class="t" style="left:26.45px;top:692.00px;font-size:13.5px;line-height:13.5px;color:#424650;transform:scaleX(1.0106);transform-origin:0 0;">Getting started</span>
<span class="t" style="left:26.47px;top:718.00px;font-size:13.5px;line-height:13.5px;color:#424650;transform:scaleX(0.9826);transform-origin:0 0;">Endpoints</span>
<span class="t" style="left:26.48px;top:744.00px;font-size:13.5px;line-height:13.5px;color:#424650;transform:scaleX(0.9666);transform-origin:0 0;">Endpoint services</span>
<span class="t" style="left:26.48px;top:770.00px;font-size:13.5px;line-height:13.5px;color:#424650;transform:scaleX(0.9718);transform-origin:0 0;">Service networks</span>
<span class="t" style="left:26.48px;top:797.00px;font-size:13.5px;line-height:13.5px;color:#424650;transform:scaleX(0.9565);transform-origin:0 0;">Lattice services</span>
<span class="t" style="left:26.51px;top:823.00px;font-size:13.5px;line-height:13.5px;color:#424650;transform:scaleX(0.8999);transform-origin:0 0;">Resource</span>
<span class="t" style="left:26.46px;top:842.00px;font-size:13.5px;line-height:13.5px;color:#424650;transform:scaleX(1.0064);transform-origin:0 0;">configurations</span>
<span class="t" style="left:26.49px;top:868.00px;font-size:13.5px;line-height:13.5px;color:#424650;transform:scaleX(0.9362);transform-origin:0 0;">Resource gateways</span>
<span class="t" style="left:26.47px;top:894.00px;font-size:13.5px;line-height:13.5px;color:#424650;transform:scaleX(0.9871);transform-origin:0 0;">Target groups</span>
<span class="t" style="left:26.50px;top:612.00px;font-size:13.5px;line-height:13.5px;color:#006ce0;font-weight:bold;transform:scaleX(0.9340);transform-origin:0 0;">Security groups</span>
<span class="t" style="left:26.40px;top:241.00px;font-size:15px;line-height:15px;color:#0f141a;font-weight:bold;transform:scaleX(0.9952);transform-origin:0 0;">Virtual private cloud</span>
<span class="t" style="left:26.43px;top:557.00px;font-size:15px;line-height:15px;color:#0f141a;font-weight:bold;transform:scaleX(0.9459);transform-origin:0 0;">Security</span>
<span class="t" style="left:26.42px;top:645.00px;font-size:15px;line-height:15px;color:#0f141a;font-weight:bold;transform:scaleX(0.9722);transform-origin:0 0;">PrivateLink and</span>
<span class="t" style="left:26.42px;top:663.00px;font-size:15px;line-height:15px;color:#0f141a;font-weight:bold;transform:scaleX(0.9667);transform-origin:0 0;">Lattice</span>
<span class="t" style="left:26.41px;top:926.00px;font-size:15px;line-height:15px;color:#0f141a;font-weight:bold;transform:scaleX(0.9911);transform-origin:0 0;">DNS firewall</span>
<span class="t" style="left:124.95px;top:694.00px;font-size:11.5px;line-height:11.5px;color:#006ce0;font-weight:bold;transform:scaleX(0.9750);transform-origin:0 0;">Updated</span>
<span class="t" style="left:93.95px;top:720.00px;font-size:11.5px;line-height:11.5px;color:#006ce0;font-weight:bold;transform:scaleX(0.9783);transform-origin:0 0;">Updated</span>
<span class="t" style="left:134.95px;top:772.00px;font-size:11.5px;line-height:11.5px;color:#006ce0;font-weight:bold;transform:scaleX(0.9826);transform-origin:0 0;">Updated</span>
<span class="t" style="left:119.56px;top:844.00px;font-size:11.5px;line-height:11.5px;color:#006ce0;font-weight:bold;transform:scaleX(0.9511);transform-origin:0 0;">New</span>
<span class="t" style="left:146.05px;top:870.00px;font-size:11.5px;line-height:11.5px;color:#006ce0;font-weight:bold;transform:scaleX(0.9680);transform-origin:0 0;">New</span>
<span class="t" style="left:34.55px;top:951.00px;font-size:11.4px;line-height:11.4px;color:#ffffff;-webkit-text-stroke:0.2px #fff;transform:scaleX(0.9938);transform-origin:0 0;">CloudShell</span>
<span class="t" style="left:113.32px;top:951.00px;font-size:11.4px;line-height:11.4px;color:#ffffff;-webkit-text-stroke:0.2px #fff;transform:scaleX(0.9494);transform-origin:0 0;">Feedback</span>
<span class="t" style="left:1408.25px;top:951.00px;font-size:11.4px;line-height:11.4px;color:#dedee3;transform:scaleX(0.9947);transform-origin:0 0;">© 2025, Amazon Web Services, Inc. or its affiliates.</span>
<span class="t" style="left:1693.45px;top:951.00px;font-size:11.4px;line-height:11.4px;color:#ffffff;-webkit-text-stroke:0.2px #fff;transform:scaleX(0.9774);transform-origin:0 0;">Privacy</span>
<span class="t" style="left:1753.55px;top:951.00px;font-size:11.4px;line-height:11.4px;color:#ffffff;-webkit-text-stroke:0.2px #fff;transform:scaleX(0.9866);transform-origin:0 0;">Terms</span>
<span class="t" style="left:1807.75px;top:951.00px;font-size:11.4px;line-height:11.4px;color:#ffffff;-webkit-text-stroke:0.2px #fff;transform:scaleX(0.9810);transform-origin:0 0;">Cookie preferences</span>
<span class="t" style="left:244.80px;top:127.00px;font-size:18px;line-height:18px;color:#0f141a;font-weight:bold;transform:scaleX(0.9675);transform-origin:0 0;">Security Groups</span>
<span class="t" style="left:385.21px;top:127.00px;font-size:18px;line-height:18px;color:#424650;transform:scaleX(1.1009);transform-origin:0 0;">(1/4)</span>
<span class="t" style="left:434.55px;top:133.00px;font-size:11.8px;line-height:11.8px;color:#006ce0;font-weight:bold;transform:scaleX(0.9480);transform-origin:0 0;">Info</span>
<span class="t" style="left:279.23px;top:167.00px;font-size:13.5px;line-height:13.5px;color:#656871;font-style:italic;transform:scaleX(0.9717);transform-origin:0 0;">Find resources by attribute or tag</span>
<span class="t" style="left:1376.90px;top:129.00px;font-size:13.5px;line-height:13.5px;color:#006ce0;font-weight:bold;transform:scaleX(0.9169);transform-origin:0 0;">Actions</span>
<span class="t" style="left:1488.89px;top:129.00px;font-size:13.5px;line-height:13.5px;color:#006ce0;font-weight:bold;transform:scaleX(0.9418);transform-origin:0 0;">Export security groups to CSV</span>
<span class="t" style="left:1747.89px;top:129.00px;font-size:13.5px;line-height:13.5px;color:#0f141a;font-weight:bold;transform:scaleX(0.9502);transform-origin:0 0;">Create security group</span>
<span class="t" style="left:1822.12px;top:167.00px;font-size:13.5px;line-height:13.5px;color:#0f141a;font-weight:bold;transform:scaleX(0.6985);transform-origin:0 0;">1</span>
<span class="t" style="left:297.49px;top:207.00px;font-size:13.2px;line-height:13.2px;color:#424650;font-weight:bold;transform:scaleX(0.9743);transform-origin:0 0;">Name</span>
<span class="t" style="left:465.99px;top:207.00px;font-size:13.2px;line-height:13.2px;color:#424650;font-weight:bold;transform:scaleX(0.9734);transform-origin:0 0;">Security group ID</span>
<span class="t" style="left:746.98px;top:207.00px;font-size:13.2px;line-height:13.2px;color:#424650;font-weight:bold;transform:scaleX(0.9776);transform-origin:0 0;">Security group name</span>
<span class="t" style="left:1028.26px;top:207.00px;font-size:13.2px;line-height:13.2px;color:#424650;font-weight:bold;transform:scaleX(0.9268);transform-origin:0 0;">VPC ID</span>
<span class="t" style="left:1309.74px;top:207.00px;font-size:13.2px;line-height:13.2px;color:#424650;font-weight:bold;transform:scaleX(0.9614);transform-origin:0 0;">Description</span>
<span class="t" style="left:1591.23px;top:207.00px;font-size:13.2px;line-height:13.2px;color:#424650;font-weight:bold;transform:scaleX(0.9855);transform-origin:0 0;">Owner</span>
<span class="t" style="left:296.82px;top:235.00px;font-size:13.5px;line-height:13.5px;color:#0f141a;transform:scaleX(0.8915);transform-origin:0 0;">–</span>
<span class="t" style="left:465.46px;top:235.00px;font-size:13.5px;line-height:13.5px;color:#006ce0;text-decoration:underline;text-underline-offset:1.5px;transform:scaleX(1.0076);transform-origin:0 0;">sg-035893beb66a53799</span>
<span class="t" style="left:746.95px;top:235.00px;font-size:13.5px;line-height:13.5px;color:#0f141a;transform:scaleX(1.0139);transform-origin:0 0;">private-sg-documentdb</span>
<span class="t" style="left:1028.20px;top:235.00px;font-size:13.5px;line-height:13.5px;color:#006ce0;text-decoration:underline;text-underline-offset:1.5px;transform:scaleX(1.0213);transform-origin:0 0;">vpc-0d3ea246091f4f810</span>
<span class="t" style="left:1309.72px;top:235.00px;font-size:13.5px;line-height:13.5px;color:#0f141a;transform:scaleX(0.9860);transform-origin:0 0;">Private Security Group for DocumentDB</span>
<span class="t" style="left:1591.20px;top:235.00px;font-size:13.5px;line-height:13.5px;color:#0f141a;transform:scaleX(1.0127);transform-origin:0 0;">343218204506</span>
<span class="t" style="left:296.82px;top:264.00px;font-size:13.5px;line-height:13.5px;color:#0f141a;transform:scaleX(0.8915);transform-origin:0 0;">–</span>
<span class="t" style="left:465.46px;top:264.00px;font-size:13.5px;line-height:13.5px;color:#006ce0;text-decoration:underline;text-underline-offset:1.5px;">sg-00ee53080d4d7bed5</span>
<span class="t" style="left:746.94px;top:264.00px;font-size:13.5px;line-height:13.5px;color:#0f141a;transform:scaleX(1.0358);transform-origin:0 0;">default</span>
<span class="t" style="left:1028.20px;top:264.00px;font-size:13.5px;line-height:13.5px;color:#006ce0;text-decoration:underline;text-underline-offset:1.5px;transform:scaleX(1.0213);transform-origin:0 0;">vpc-0d3ea246091f4f810</span>
<span class="t" style="left:1309.72px;top:264.00px;font-size:13.5px;line-height:13.5px;color:#0f141a;transform:scaleX(0.9838);transform-origin:0 0;">default VPC security group</span>
<span class="t" style="left:1591.20px;top:264.00px;font-size:13.5px;line-height:13.5px;color:#0f141a;transform:scaleX(1.0127);transform-origin:0 0;">343218204506</span>
<span class="t" style="left:296.82px;top:293.00px;font-size:13.5px;line-height:13.5px;color:#0f141a;transform:scaleX(0.8915);transform-origin:0 0;">–</span>
<span class="t" style="left:465.45px;top:293.00px;font-size:13.5px;line-height:13.5px;color:#006ce0;text-decoration:underline;text-underline-offset:1.5px;transform:scaleX(1.0093);transform-origin:0 0;">sg-001edd7405e76b2b4</span>
<span class="t" style="left:746.94px;top:293.00px;font-size:13.5px;line-height:13.5px;color:#0f141a;transform:scaleX(1.0358);transform-origin:0 0;">default</span>
<span class="t" style="left:1028.21px;top:293.00px;font-size:13.5px;line-height:13.5px;color:#006ce0;text-decoration:underline;text-underline-offset:1.5px;transform:scaleX(0.9942);transform-origin:0 0;">vpc-0dd0c8b0dcdca0492</span>
<span class="t" style="left:1309.72px;top:293.00px;font-size:13.5px;line-height:13.5px;color:#0f141a;transform:scaleX(0.9838);transform-origin:0 0;">default VPC security group</span>
<span class="t" style="left:1591.20px;top:293.00px;font-size:13.5px;line-height:13.5px;color:#0f141a;transform:scaleX(1.0127);transform-origin:0 0;">343218204506</span>
<span class="t" style="left:296.82px;top:322.00px;font-size:13.5px;line-height:13.5px;color:#0f141a;transform:scaleX(0.8915);transform-origin:0 0;">–</span>
<span class="t" style="left:465.46px;top:322.00px;font-size:13.5px;line-height:13.5px;color:#006ce0;text-decoration:underline;text-underline-offset:1.5px;transform:scaleX(1.0045);transform-origin:0 0;">sg-0be9f24e7c449fe2e</span>
<span class="t" style="left:746.97px;top:322.00px;font-size:13.5px;line-height:13.5px;color:#0f141a;transform:scaleX(0.9901);transform-origin:0 0;">public-sg-ec2</span>
<span class="t" style="left:1028.20px;top:322.00px;font-size:13.5px;line-height:13.5px;color:#006ce0;text-decoration:underline;text-underline-offset:1.5px;transform:scaleX(1.0213);transform-origin:0 0;">vpc-0d3ea246091f4f810</span>
<span class="t" style="left:1309.73px;top:322.00px;font-size:13.5px;line-height:13.5px;color:#0f141a;transform:scaleX(0.9676);transform-origin:0 0;">Public Security Group for EC2</span>
<span class="t" style="left:1591.20px;top:322.00px;font-size:13.5px;line-height:13.5px;color:#0f141a;transform:scaleX(1.0127);transform-origin:0 0;">343218204506</span>
<span class="t" style="left:240.77px;top:610.00px;font-size:18px;line-height:18px;color:#0f141a;font-weight:bold;transform:scaleX(1.0166);transform-origin:0 0;">sg-0be9f24e7c449fe2e - public-sg-ec2</span>
<span class="t" style="left:260.92px;top:662.00px;font-size:15px;line-height:15px;color:#006ce0;font-weight:bold;transform:scaleX(0.9705);transform-origin:0 0;">Details</span>
<span class="t" style="left:349.16px;top:662.00px;font-size:15px;line-height:15px;color:#424650;font-weight:bold;transform:scaleX(0.9806);transform-origin:0 0;">Inbound rules</span>
<span class="t" style="left:486.66px;top:662.00px;font-size:15px;line-height:15px;color:#424650;font-weight:bold;transform:scaleX(0.9850);transform-origin:0 0;">Outbound rules</span>
<span class="t" style="left:637.16px;top:662.00px;font-size:15px;line-height:15px;color:#424650;font-weight:bold;transform:scaleX(0.9821);transform-origin:0 0;">Sharing -</span>
<span class="t" style="left:705.71px;top:662.00px;font-size:15px;line-height:15px;color:#424650;font-weight:bold;font-style:italic;transform:scaleX(0.8994);transform-origin:0 0;">new</span>
<span class="t" style="left:772.44px;top:662.00px;font-size:15px;line-height:15px;color:#424650;font-weight:bold;transform:scaleX(0.9404);transform-origin:0 0;">VPC associations -</span>
<span class="t" style="left:903.95px;top:662.00px;font-size:15px;line-height:15px;color:#424650;font-weight:bold;font-style:italic;transform:scaleX(0.9165);transform-origin:0 0;">new</span>
<span class="t" style="left:970.69px;top:662.00px;font-size:15px;line-height:15px;color:#424650;font-weight:bold;transform:scaleX(0.9364);transform-origin:0 0;">Tags</span>
<span class="t" style="left:260.79px;top:745.00px;font-size:18px;line-height:18px;color:#0f141a;font-weight:bold;transform:scaleX(0.9868);transform-origin:0 0;">Details</span>
<span class="t" style="left:260.99px;top:779.00px;font-size:13.3px;line-height:13.3px;color:#0f141a;font-weight:bold;transform:scaleX(0.9640);transform-origin:0 0;">Security group name</span>
<span class="t" style="left:290.97px;top:798.00px;font-size:13.5px;line-height:13.5px;color:#0f141a;transform:scaleX(0.9838);transform-origin:0 0;">public-sg-ec2</span>
<span class="t" style="left:260.98px;top:835.00px;font-size:13.3px;line-height:13.3px;color:#0f141a;font-weight:bold;transform:scaleX(0.9724);transform-origin:0 0;">Owner</span>
<span class="t" style="left:290.95px;top:854.00px;font-size:13.5px;line-height:13.5px;color:#0f141a;transform:scaleX(1.0127);transform-origin:0 0;">343218204506</span>
<span class="t" style="left:676.99px;top:779.00px;font-size:13.3px;line-height:13.3px;color:#0f141a;font-weight:bold;transform:scaleX(0.9655);transform-origin:0 0;">Security group ID</span>
<span class="t" style="left:706.96px;top:798.00px;font-size:13.5px;line-height:13.5px;color:#0f141a;transform:scaleX(1.0045);transform-origin:0 0;">sg-0be9f24e7c449fe2e</span>
<span class="t" style="left:676.98px;top:835.00px;font-size:13.3px;line-height:13.3px;color:#0f141a;font-weight:bold;transform:scaleX(0.9683);transform-origin:0 0;">Inbound rules count</span>
<span class="t" style="left:676.97px;top:854.00px;font-size:13.5px;line-height:13.5px;color:#0f141a;transform:scaleX(0.9750);transform-origin:0 0;">4 Permission entries</span>
<span class="t" style="left:1092.75px;top:779.00px;font-size:13.3px;line-height:13.3px;color:#0f141a;font-weight:bold;transform:scaleX(0.9466);transform-origin:0 0;">Description</span>
<span class="t" style="left:1122.73px;top:798.00px;font-size:13.5px;line-height:13.5px;color:#0f141a;transform:scaleX(0.9676);transform-origin:0 0;">Public Security Group for EC2</span>
<span class="t" style="left:1092.73px;top:835.00px;font-size:13.3px;line-height:13.3px;color:#0f141a;font-weight:bold;transform:scaleX(0.9703);transform-origin:0 0;">Outbound rules count</span>
<span class="t" style="left:1092.72px;top:854.00px;font-size:13.5px;line-height:13.5px;color:#0f141a;transform:scaleX(0.9884);transform-origin:0 0;">1 Permission entry</span>
<span class="t" style="left:1508.11px;top:779.00px;font-size:13.3px;line-height:13.3px;color:#0f141a;font-weight:bold;transform:scaleX(0.9201);transform-origin:0 0;">VPC ID</span>
<span class="t" style="left:1537.85px;top:798.00px;font-size:13.5px;line-height:13.5px;color:#006ce0;text-decoration:underline;text-underline-offset:1.5px;transform:scaleX(1.0231);transform-origin:0 0;">vpc-0d3ea246091f4f810</span>
<div style="left:1860px;top:195px;width:41px;height:170px;overflow:hidden"><span class="t" style="left:12.22px;top:12.00px;font-size:13.2px;line-height:13.2px;color:#424650;font-weight:bold;transform:scaleX(1.0099);transform-origin:0 0;">Inbound rules count</span><span class="t" style="left:12.71px;top:40.00px;font-size:13.5px;line-height:13.5px;color:#0f141a;transform:scaleX(0.9034);transform-origin:0 0;">1 Permission entry</span><span class="t" style="left:12.71px;top:69.00px;font-size:13.5px;line-height:13.5px;color:#0f141a;transform:scaleX(0.9034);transform-origin:0 0;">1 Permission entry</span><span class="t" style="left:12.71px;top:98.00px;font-size:13.5px;line-height:13.5px;color:#0f141a;transform:scaleX(0.9034);transform-origin:0 0;">1 Permission entry</span><span class="t" style="left:12.72px;top:127.00px;font-size:13.5px;line-height:13.5px;color:#0f141a;transform:scaleX(0.8912);transform-origin:0 0;">4 Permission entries</span></div>
</body></html>
